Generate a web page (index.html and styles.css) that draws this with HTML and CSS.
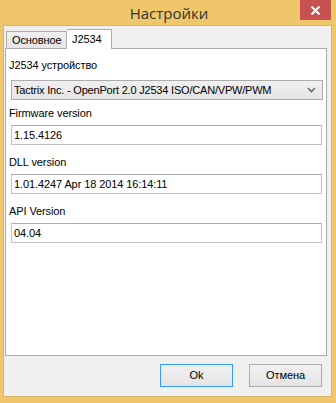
FILE: index.html
```html
<!DOCTYPE html>
<html>
<head>
<meta charset="utf-8">
<link rel="stylesheet" href="styles.css">
</head>
<body>
<div class="window">
  <div class="titlebar">
    <span></span>
    <div class="title">Настройки</div>
    <div class="close">
      <svg width="11" height="9" viewBox="0 0 11 9"><path d="M1.5 0.5 L9.5 8.5 M9.5 0.5 L1.5 8.5" stroke="#fff" stroke-width="2"/></svg>
    </div>
  </div>
  <div class="client">
    <div class="tabs">
      <div class="tab">Основное</div>
      <div class="tab active">J2534</div>
    </div>
    <div class="pane">
      <div class="field first">
        <div class="label">J2534 устройство</div>
        <div class="select">
          <span>Tactrix Inc. - OpenPort 2.0 J2534 ISO/CAN/VPW/PWM</span>
          <svg width="9" height="6" viewBox="0 0 9 6"><path d="M1 1 L4.5 4.5 L8 1" stroke="#6d6d6d" stroke-width="1.6" fill="none"/></svg>
        </div>
      </div>
      <div class="field second">
        <div class="label">Firmware version</div>
        <div class="input">1.15.4126</div>
      </div>
      <div class="field">
        <div class="label">DLL version</div>
        <div class="input">1.01.4247 Apr 18 2014 16:14:11</div>
      </div>
      <div class="field">
        <div class="label">API Version</div>
        <div class="input">04.04</div>
      </div>
    </div>
    <div class="buttons">
      <div class="btn default">Ok</div>
      <div class="btn">Отмена</div>
    </div>
  </div>
</div>
</body>
</html>
```

FILE: styles.css
```css
html, body {
  margin: 0;
  padding: 0;
}
body {
  background: #efc76a;
  width: 336px;
  height: 403px;
  overflow: hidden;
  font-family: "Liberation Sans", Arial, sans-serif;
  font-size: 11px;
  letter-spacing: -0.1px;
  color: #000;
}
.window {
  width: 336px;
  height: 403px;
  display: flex;
  flex-direction: column;
}
.titlebar {
  height: 26px;
  display: grid;
  grid-template-columns: 1fr auto 1fr;
  align-items: start;
}
.title {
  font-family: "Open Sans", "Noto Sans", sans-serif;
  font-size: 15px;
  letter-spacing: 0;
  color: #333;
  line-height: 26px;
  padding-left: 2px;
}
.close {
  justify-self: end;
  width: 31px;
  height: 20px;
  margin-right: 5px;
  background: #c75050;
  display: flex;
  align-items: center;
  justify-content: center;
}
.client {
  flex: 1;
  margin: 0 5px 7px 4px;
  background: #f0f0f0;
  display: flex;
  flex-direction: column;
  box-shadow: 0 0 0 1px #d9b464;
}
.tabs {
  display: flex;
  align-items: flex-end;
  padding: 2px 0 0 2px;
  height: 20px;
  position: relative;
  z-index: 1;
}
.tab {
  height: 16px;
  line-height: 16px;
  padding: 0 3px 0 5px;
  border: 1px solid #acacac;
  border-bottom: none;
  background: linear-gradient(#f0f0f0, #e5e5e5);
  width: 51px;
}
.tab.active {
  height: 19px;
  line-height: 18px;
  width: 35px;
  padding: 0 4px 0 5px;
  background: #fff;
  border-left: none;
  margin-bottom: -1px;
}
.pane {
  margin: 0 4px 0 1px;
  height: 306px;
  background: #fff;
  border: 1px solid #acacac;
  padding: 0 5px;
  display: flex;
  flex-direction: column;
}
.field {
  display: flex;
  flex-direction: column;
}
.label {
  height: 13px;
  line-height: 13px;
  margin-left: -2px;
  margin-top: 11px;
  margin-bottom: 5px;
}
.field.first .label {
  margin-top: 10px;
  margin-bottom: 8px;
}
.field.second .label {
  margin-top: 7px;
}
.select {
  height: 18px;
  border: 1px solid #acacac;
  background: linear-gradient(#f0f0f0, #e5e5e5);
  display: flex;
  align-items: center;
  justify-content: space-between;
  padding: 0 6px 0 2px;
  width: 302px;
  letter-spacing: -0.2px;
}
.input {
  height: 18px;
  line-height: 18px;
  border: 1px solid #abadb3;
  border-color: #abadb3 #c2c2c2 #c2c2c2 #c2c2c2;
  padding: 0 2px;
  width: 305px;
}
.buttons {
  display: flex;
  justify-content: flex-end;
  gap: 16px;
  padding: 8px 9px 0 0;
}
.btn {
  width: 71px;
  height: 21px;
  line-height: 21px;
  text-align: center;
  border: 1px solid #acacac;
  background: linear-gradient(#f0f0f0, #e5e5e5);
}
.btn.default {
  border-color: #3399ff;
}
```
